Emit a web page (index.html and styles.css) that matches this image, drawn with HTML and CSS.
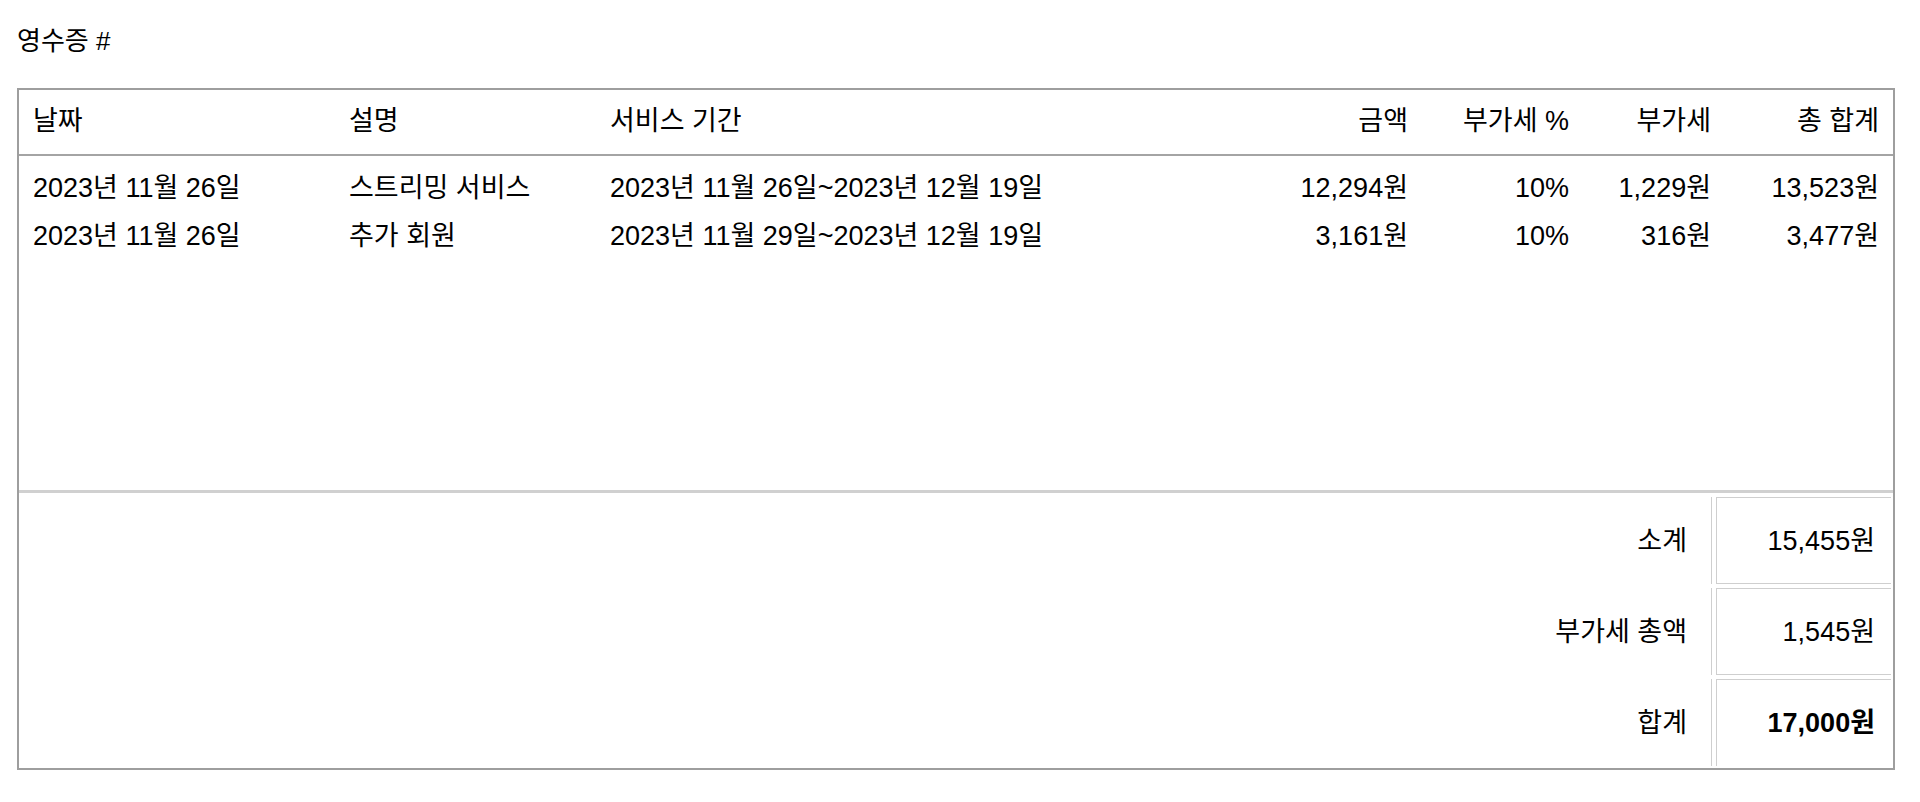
FILE: index.html
```html
<!DOCTYPE html>
<html lang="ko">
<head>
<meta charset="utf-8">
<title>영수증</title>
<link rel="stylesheet" href="styles.css">
</head>
<body>
<h1 class="title">영수증 #</h1>
<div class="receipt">
  <div class="row head">
    <div class="c">날짜</div>
    <div class="c">설명</div>
    <div class="c">서비스 기간</div>
    <div class="c r">금액</div>
    <div class="c r">부가세 %</div>
    <div class="c r">부가세</div>
    <div class="c r">총 합계</div>
  </div>
  <div class="items">
    <div class="row item">
      <div class="c">2023년 11월 26일</div>
      <div class="c">스트리밍 서비스</div>
      <div class="c">2023년 11월 26일~2023년 12월 19일</div>
      <div class="c r">12,294원</div>
      <div class="c r">10%</div>
      <div class="c r">1,229원</div>
      <div class="c r">13,523원</div>
    </div>
    <div class="row item">
      <div class="c">2023년 11월 26일</div>
      <div class="c">추가 회원</div>
      <div class="c">2023년 11월 29일~2023년 12월 19일</div>
      <div class="c r">3,161원</div>
      <div class="c r">10%</div>
      <div class="c r">316원</div>
      <div class="c r">3,477원</div>
    </div>
  </div>
  <div class="totals">
    <div class="label">소계</div>
    <div class="value">15,455원</div>
    <div class="label">부가세 총액</div>
    <div class="value">1,545원</div>
    <div class="label">합계</div>
    <div class="value last strong">17,000원</div>
  </div>
</div>
</body>
</html>
```

FILE: styles.css
```css
html, body {
  margin: 0;
  padding: 0;
  background: #ffffff;
}

body {
  font-family: "Liberation Sans", "Noto Sans CJK KR", Arial, sans-serif;
  font-size: 26px;
  line-height: 30px;
  color: #000000;
  padding: 26px 25px 0 17px;
}

.title {
  margin: 0 0 32px 0;
  font-size: 26px;
  line-height: 30px;
  font-weight: normal;
}

.receipt {
  border: 2px solid #9e9e9e;
  font-size: 27px;
}

.row {
  display: grid;
  grid-template-columns: 316px 261px 1fr 222px 161px 142px 168px;
}

.c {
  padding: 0 14px;
  white-space: nowrap;
}

.r {
  text-align: right;
}

.head {
  padding: 16px 0 18px 0;
  border-bottom: 2px solid #a4a4a4;
}

.items {
  box-sizing: border-box;
  height: 337px;
  padding-top: 8px;
  border-bottom: 3px solid #d0d0d0;
}

.item {
  padding: 9px 0;
}

.totals {
  display: grid;
  grid-template-columns: 1fr 175px;
  grid-auto-rows: 87px;
  column-gap: 4px;
  row-gap: 4px;
  padding: 4px 2px 2px 0;
}

.label {
  display: flex;
  align-items: center;
  justify-content: flex-end;
  padding-right: 24px;
  border-right: 1px solid #cfcfcf;
}

.value {
  display: flex;
  align-items: center;
  justify-content: flex-end;
  padding-right: 16px;
  border-top: 1px solid #cfcfcf;
  border-bottom: 1px solid #cfcfcf;
  border-left: 1px solid #cfcfcf;
}

.value.last {
  border-bottom: none;
}

.strong {
  font-weight: bold;
}
```
